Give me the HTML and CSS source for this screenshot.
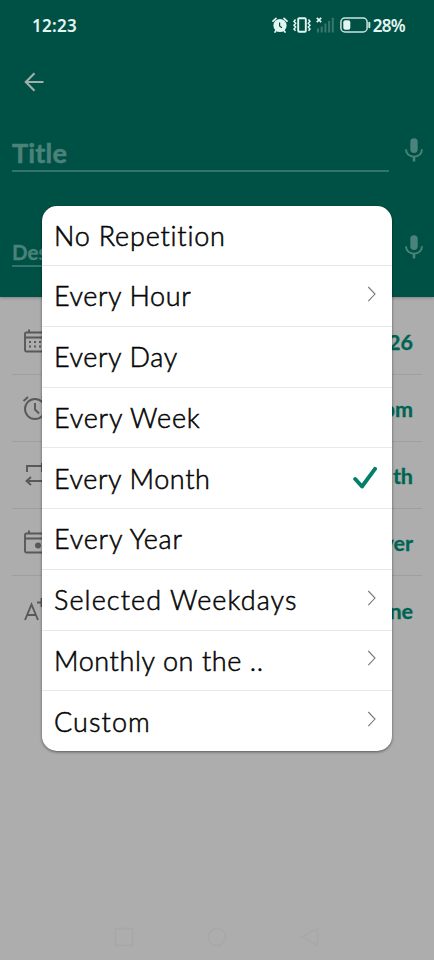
FILE: index.html
```html
<!DOCTYPE html>
<html lang="en">
<head>
<meta charset="utf-8">
<meta name="viewport" content="width=device-width, initial-scale=1">
<title>Reminder</title>
<link rel="stylesheet" href="styles.css">
</head>
<body>
<svg width="0" height="0" class="defs">
  <symbol id="mic" viewBox="0 0 18 24"><rect x="5.3" y="0.3" width="7.4" height="14.7" rx="3.7" fill="currentColor"/><path d="M1 11.3c0 4.400 3.500 7.300 8 7.300s8-2.900 8-7.300" fill="none" stroke="currentColor" stroke-width="1.900"/><path d="M9 18.500V23.500" stroke="currentColor" stroke-width="2.600"/></symbol>
  <symbol id="chev" viewBox="0 0 10 16"><path d="M1.300 1 8 8.100 1.300 15.200" fill="none" stroke="#777" stroke-width="1.100"/></symbol>
</svg>
<div class="screen">
  <header class="header">
    <div class="status">
      <span class="time">12:23</span>
      <div class="indicators">
        <svg class="alarm" viewBox="0 0 16 16"><circle cx="8" cy="8.500" r="6.600" fill="#e3f5f1"/><path d="M1 4.200 4 1.300M15 4.200 12 1.300M3 15l1.500-2M13 15l-1.500-2" stroke="#e3f5f1" stroke-width="1.700" stroke-linecap="round"/><path d="M7.600 5.500v3.500l2.300 1.800" fill="none" stroke="#005145" stroke-width="1.200"/></svg>
        <svg class="vibrate" viewBox="0 0 18 16"><rect x="5.200" y="1.200" width="7.600" height="13.600" rx="1" fill="none" stroke="#e3f5f1" stroke-width="1.900"/><path d="M2.500 2.500 1 4.500l1.700 1.800L1 8.200l1.700 1.900L1 12l1.500 1.800M15.500 2.500 17 4.500l-1.700 1.800L17 8.200l-1.700 1.900L17 12l-1.500 1.800" fill="none" stroke="#e3f5f1" stroke-width="1.500"/></svg>
        <svg class="signal" viewBox="0 0 18 16"><path d="M.8.800l4.400 4.400M5.200.800.800 5.200" stroke="#e3f5f1" stroke-width="1.700"/><path d="M2 11.500v4M5.700 9.500v6M9.400 6.500v9M13.100 4v11.500M16.800 .800v14.700" stroke="#39776e" stroke-width="2"/></svg>
        <svg class="battery" viewBox="0 0 31 16"><rect x=".900" y="1" width="26.200" height="14" rx="4" fill="none" stroke="#c8e5df" stroke-width="1.500"/><rect x="3.300" y="3.300" width="7" height="9.400" rx="2" fill="#e3f5f1"/><path d="M29.300 5.800v4.400" stroke="#c8e5df" stroke-width="2" stroke-linecap="round"/></svg>
        <span class="percent">28%</span>
      </div>
    </div>
    <svg class="back" viewBox="0 0 20 20"><path d="M19.500 10H2M10.500 1.300 1.800 10l8.700 8.700" fill="none" stroke="currentColor" stroke-width="2.100"/></svg>
    <div class="field title"><span class="input">Title</span><svg class="mic"><use href="#mic"/></svg></div>
    <div class="field desc"><span class="input">Des</span><svg class="mic"><use href="#mic"/></svg></div>
  </header>
  <main class="options">
    <div class="option"><svg viewBox="0 0 24 24"><rect x="1" y="3.500" width="22" height="19" rx="1.500"/><path d="M1 8.500h22M5 .5v3M19 .5v3"/><path d="M5 13h15M5 17.500h15" stroke-dasharray="2 3"/></svg><span>26</span></div>
    <div class="option"><svg viewBox="0 0 24 24"><circle cx="11" cy="13" r="10"/><path d="M11 7v6.500l4 4M-.5 5l4.500-4M23 5l-5-4"/></svg><span>pm</span></div>
    <div class="option"><svg viewBox="0 0 24 24"><path d="M3 9V3h15v6M18 0v6M22 14v4H3M7 14l-4.500 4L7 22"/></svg><span>th</span></div>
    <div class="option"><svg viewBox="0 0 24 24"><rect x="1" y="3.500" width="22" height="19" rx="1.500"/><path d="M1 8.500h22M5 .5v3M19 .5v3"/><circle cx="14" cy="15.500" r="3" fill="#595959" stroke="none"/></svg><span>ver</span></div>
    <div class="option"><svg viewBox="0 0 24 24"><path d="M1 22 7.500 6.500 14 22M3.500 17h8M13 4.500h8M17.500 0v9"/></svg><span>ne</span></div>
  </main>
  <nav class="nav">
    <svg viewBox="0 0 20 20"><path d="M1.500 1.500h17v17h-17z"/></svg>
    <svg viewBox="0 0 20 20"><circle cx="10" cy="10" r="8.500"/></svg>
    <svg viewBox="0 0 20 20"><path d="M17.500 1.500v17L2 10z"/></svg>
  </nav>
  <ul class="menu">
    <li><span class="ls-m">No Repetition</span></li>
    <li><span class="ls-s">Every Hour</span><svg class="chev"><use href="#chev"/></svg></li>
    <li><span class="ls-s">Every Day</span></li>
    <li><span class="ls-m">Every Week</span></li>
    <li><span class="ls-s">Every Month</span><svg class="check" viewBox="0 0 24 24"><path d="M2.200 13 9 20.500 22 2.800" fill="none" stroke="#00806a" stroke-width="3.900" stroke-linecap="round" stroke-linejoin="round"/></svg></li>
    <li><span class="ls-m">Every Year</span></li>
    <li><span class="ls-l">Selected Weekdays</span><svg class="chev"><use href="#chev"/></svg></li>
    <li><span class="ls-s">Monthly on the ..</span><svg class="chev"><use href="#chev"/></svg></li>
    <li><span class="ls-l">Custom</span><svg class="chev"><use href="#chev"/></svg></li>
  </ul>
</div>
</body>
</html>
```
FILE: styles.css
```css
* { box-sizing: border-box; }
body { margin: 0; font-family: Lato, sans-serif; font-variant-ligatures: none; }
.defs { position: absolute; }
.screen { position: relative; width: 434px; height: 960px; background: #adadad; display: flex; flex-direction: column; overflow: hidden; }
.header { height: 297px; flex: none; background: #005145; display: flex; flex-direction: column; box-shadow: 0 1px 3px rgba(0,0,0,.25); }
.status { height: 50px; display: flex; justify-content: space-between; align-items: center; padding: 0 29px 0 32px; color: #e3f5f1; font: 600 17px "Noto Sans", sans-serif; }
.time { letter-spacing: .3px; }
.indicators { display: flex; align-items: center; }
.indicators svg { height: 16px; flex: none; }
.alarm { width: 16px; }
.vibrate { width: 18px; margin-left: 5px; }
.signal { width: 18px; margin-left: 5px; }
.battery { width: 31px; margin-left: 6px; }
.percent { margin-left: 2px; letter-spacing: -.7px; }
.back { width: 20px; height: 20px; margin: 22px 0 0 24px; color: #a3aeab; flex: none; }
.field { display: flex; align-items: flex-start; padding: 0 12px; color: #4b8279; font-weight: 700; }
.input { width: 377px; border-bottom: 2px solid #34746a; flex: none; }
.title { margin-top: 45px; font-size: 27px; line-height: 32px; height: 36px; }
.title .input { height: 35px; letter-spacing: .2px; -webkit-text-stroke: .5px #4b8279; }
.desc { margin-top: 61px; font-size: 20.5px; line-height: 37px; }
.desc .input { height: 33px; -webkit-text-stroke: .3px #4b8279; }
.mic { width: 18px; height: 24px; margin: 1px 0 0 15.500px; flex: none; }
.options { padding: 11px 12px 0; }
.option { height: 67px; border-bottom: 1px solid #9f9f9f; display: flex; justify-content: space-between; align-items: center; padding: 0 9px 0 12px; color: #006452; font-size: 21.5px; font-weight: 700; }
.option span { padding-top: 2px; -webkit-text-stroke: .3px #006452; }
.option:last-child { border: 0; }
.option svg { width: 24px; height: 24px; overflow: visible; fill: none; stroke: #595959; stroke-width: 1.900; }
.nav { margin-top: auto; height: 46px; display: flex; justify-content: space-between; padding: 13px 114px 0; }
.nav svg { width: 20px; height: 20px; fill: none; stroke: #a8a8a8; stroke-width: 1.500; }
.menu { position: absolute; left: 42px; top: 206px; width: 350px; height: 545px; margin: 0; padding: 0; list-style: none; background: #fff; border-radius: 15px; display: grid; grid-template-rows: 60px repeat(7, 60.75px) 1fr; box-shadow: 0 1px 3px rgba(0,0,0,.5); }
.menu li { display: flex; justify-content: space-between; align-items: center; padding: 1px 15px 0 12px; border-bottom: 1px solid #e8e8e8; font-size: 27px; font-weight: 300; line-height: 34px; color: #050505; white-space: nowrap; -webkit-text-stroke: .55px #050505; }
.menu li:last-child { border: 0; }
.ls-s { letter-spacing: .6px; }
.ls-m { letter-spacing: .8px; }
.ls-l { letter-spacing: 1.1px; }
.chev { width: 10px; height: 16px; margin-top: -5px; }
.check { width: 24px; height: 24px; margin-top: -1px; }
```
